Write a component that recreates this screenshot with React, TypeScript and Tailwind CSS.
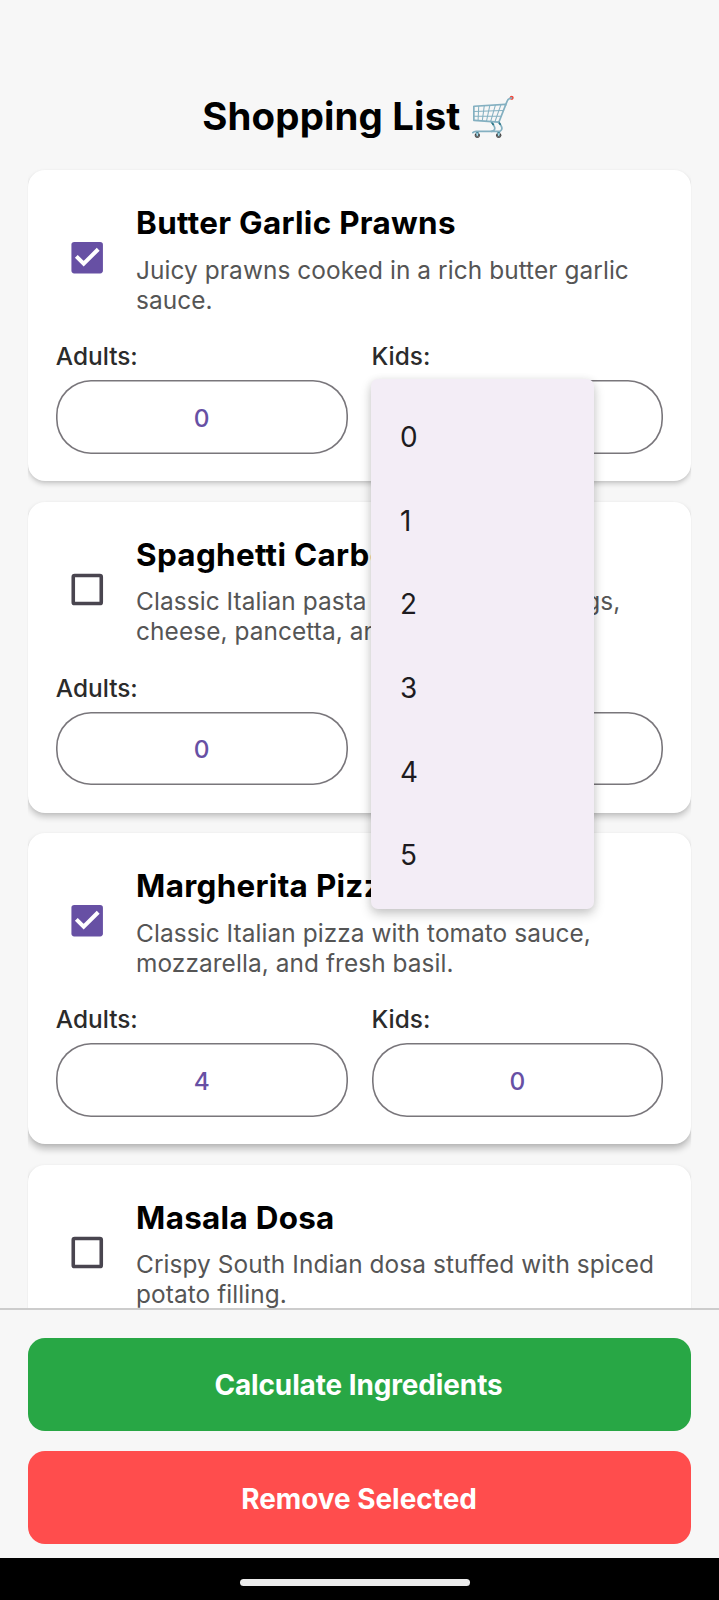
import React from "react";

type Dish = {
  name: string;
  lines: [string, string];
  selected: boolean;
  adults: number;
  kids: number;
  shadow: string;
};

const dishes: Dish[] = [
  {
    name: "Butter Garlic Prawns",
    lines: ["Juicy prawns cooked in a rich butter garlic", "sauce."],
    selected: true,
    adults: 0,
    kids: 0,
    shadow: "shadow-[0_3px_5px_rgba(0,0,0,0.17),0_1px_3px_rgba(0,0,0,0.06)]",
  },
  {
    name: "Spaghetti Carbonara",
    lines: ["Classic Italian pasta dish made with eggs,", "cheese, pancetta, and pepper."],
    selected: false,
    adults: 0,
    kids: 0,
    shadow: "shadow-[0_4px_6px_rgba(0,0,0,0.2),0_1px_3px_rgba(0,0,0,0.06)]",
  },
  {
    name: "Margherita Pizza",
    lines: ["Classic Italian pizza with tomato sauce,", "mozzarella, and fresh basil."],
    selected: true,
    adults: 4,
    kids: 0,
    shadow: "shadow-[0_5px_7px_rgba(0,0,0,0.24),0_1px_3px_rgba(0,0,0,0.06)]",
  },
  {
    name: "Masala Dosa",
    lines: ["Crispy South Indian dosa stuffed with spiced", "potato filling."],
    selected: false,
    adults: 0,
    kids: 0,
    shadow: "shadow-[0_5px_7px_rgba(0,0,0,0.24),0_1px_3px_rgba(0,0,0,0.06)]",
  },
];

function Checkbox({ checked }: { checked: boolean }) {
  return (
    <svg viewBox="0 0 24 24" className="size-[42px] shrink-0">
      {checked ? (
        <>
          <rect x="3.1" y="2.8" width="18" height="18" rx="1.6" fill="#6750a4" />
          <path d="M5.9 11.1 10.1 15.3l8.3-8.3" fill="none" stroke="#fff" strokeWidth="2.3" />
        </>
      ) : (
        <rect x="4.15" y="3.75" width="16" height="16" rx="0.8" fill="none" stroke="#49454f" strokeWidth="2.05" />
      )}
    </svg>
  );
}

function CountMenu() {
  return (
    <div className="absolute -top-px -left-[0.4px] z-20 h-[530px] w-[222.7px] rounded-[7px] bg-[#f3edf6] pt-[15.7px] shadow-[0_5px_12px_rgba(0,0,0,0.2),0_1px_8px_rgba(0,0,0,0.07)]">
      {[0, 1, 2, 3, 4, 5].map((n) => (
        <div
          key={n}
          className="flex h-[83.7px] items-center pl-[28.9px] text-[27.9px] leading-[34px] text-[#1d1b20]"
        >
          {n}
        </div>
      ))}
    </div>
  );
}

function Field({ label, value, open }: { label: string; value: number; open?: boolean }) {
  return (
    <div className="flex-1">
      <div className="h-[30px] text-[24.4px] leading-[30px] font-[460] text-[#2b2b2b]">{label}</div>
      <div className="relative mt-[9.2px]">
        <button className="flex h-[73.2px] w-full items-center justify-center rounded-[35px] pt-px text-[24.4px] leading-[30px] font-[460] text-[#6750a4] shadow-[inset_0_0_0_1.6px_#79767b]">
          {value}
        </button>
        {open && <CountMenu />}
      </div>
    </div>
  );
}

function DishCard({ dish, menuOpen }: { dish: Dish; menuOpen: boolean }) {
  return (
    <div className="relative h-[310.9px] shrink-0">
      <div className="absolute inset-0 [clip-path:inset(-6px_0_-20px_0)]">
        <div className={`h-full rounded-[17px] bg-white ${dish.shadow}`} />
      </div>
      <div className="relative px-[28px] pt-[33.3px]">
        <div className="flex h-[137.8px]">
          <div className="ml-[10.6px] pt-[33.6px]">
            <Checkbox checked={dish.selected} />
          </div>
          <div className="ml-[27.7px] pt-[0.6px] whitespace-nowrap">
            <h2 className="text-[31.4px] leading-[38px] font-bold tracking-[0.31px] text-black">{dish.name}</h2>
            <p className="mt-[12.9px] text-[24.4px] leading-[30px] tracking-[0.08px] text-[#555555]">
              {dish.lines[0]}
              <br />
              {dish.lines[1]}
            </p>
          </div>
        </div>
        <div className="flex gap-[24px]">
          <Field label="Adults:" value={dish.adults} />
          <Field label="Kids:" value={dish.kids} open={menuOpen} />
        </div>
      </div>
    </div>
  );
}

export default function App() {
  return (
    <div className="flex h-[1600px] w-[719px] flex-col overflow-hidden bg-[#f7f7f7] font-['Inter','Noto_Color_Emoji',sans-serif]">
      <h1 className="h-[163px] shrink-0 pt-[93px] pl-px text-center text-[38.4px] leading-[46px] font-bold tracking-[0.15px] text-black">
        Shopping List 🛒
      </h1>
      <main className="h-[1144.5px] shrink-0 overflow-hidden px-[27.8px] pt-[7.2px]">
        <div className="flex flex-col gap-[20.6px]">
          {dishes.map((dish, i) => (
            <div key={dish.name} className={i === 0 ? "relative z-10" : "relative"}>
              <DishCard dish={dish} menuOpen={i === 0} />
            </div>
          ))}
        </div>
      </main>
      <footer className="flex h-[250px] shrink-0 flex-col gap-[20.6px] border-t-2 border-[#cccccc] px-[28px] pt-[28.5px]">
        <button className="h-[92.8px] w-full rounded-[17px] bg-[#28a745] pt-[2px] pr-[2px] text-[27.9px] leading-[34px] font-bold tracking-[-0.08px] text-white">
          Calculate Ingredients
        </button>
        <button className="h-[92.8px] w-full rounded-[17px] bg-[#ff4d4d] pt-[2px] pr-px text-[27.9px] leading-[34px] font-bold text-white">
          Remove Selected
        </button>
      </footer>
      <div className="flex flex-1 justify-center bg-black pt-[21.5px]">
        <div className="mr-[9px] h-[7px] w-[230.5px] rounded-full bg-[#ebebeb]" />
      </div>
    </div>
  );
}
